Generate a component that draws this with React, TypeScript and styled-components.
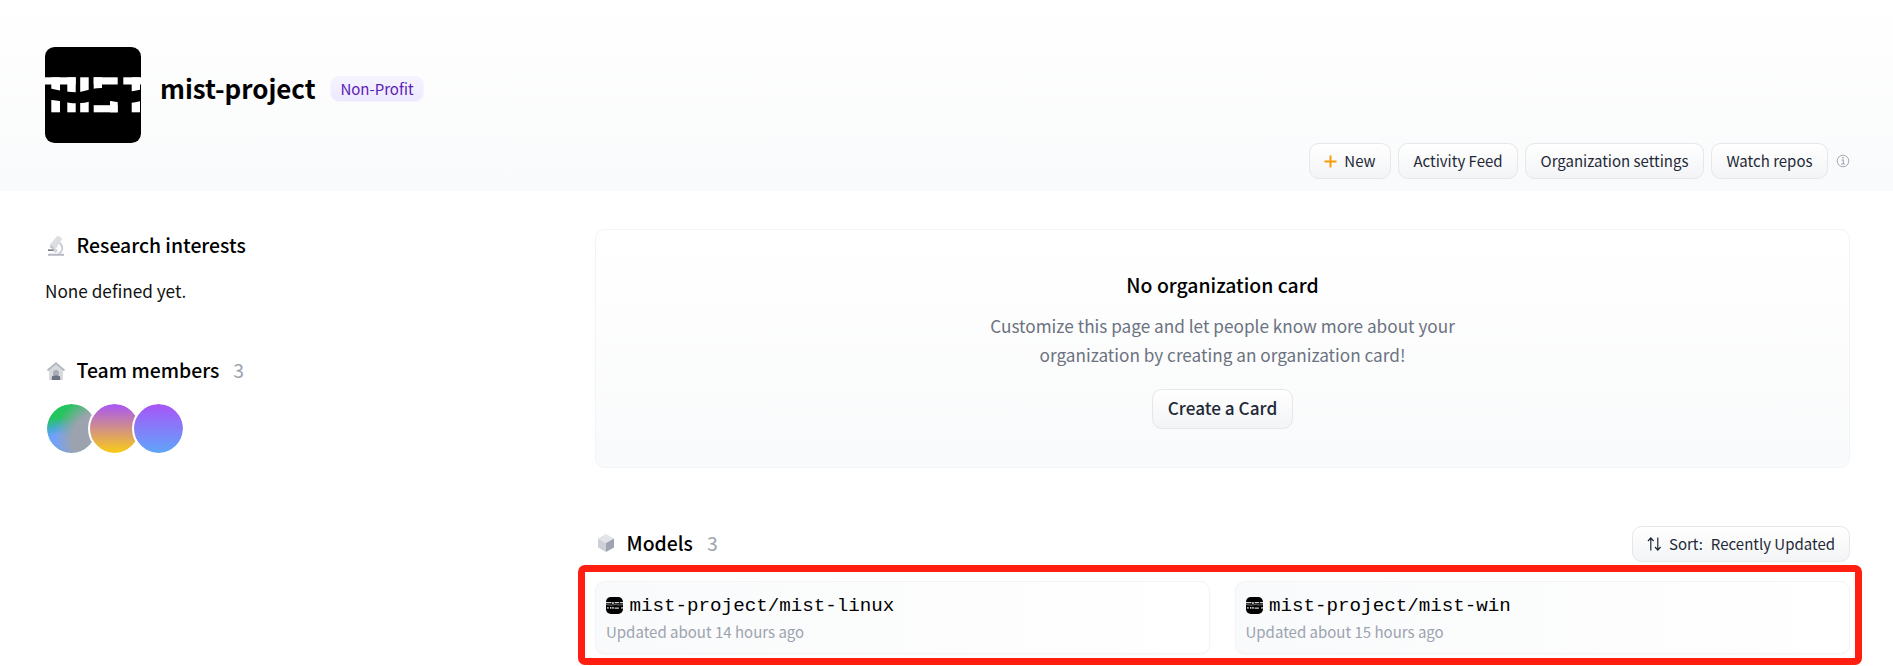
import React from "react";
import styled, { createGlobalStyle } from "styled-components";

const GlobalStyle = createGlobalStyle`
  *, *::before, *::after { box-sizing: border-box; }
  body {
    margin: 0;
    background: #fff;
    color: #000;
    font-family: "Noto Sans CJK SC", "Noto Sans", sans-serif;
    font-size: 17.2px;
    line-height: 29px;
    overflow: hidden;
  }
  h1, h2, h3, p { margin: 0; }
  button { font-family: inherit; margin: 0; }
`;

const Page = styled.div`
  height: 666px;
  overflow: hidden;
`;

const Header = styled.header`
  height: 191px;
  padding: 47px 43px 12px 45px;
  background: linear-gradient(to bottom, #fff, #f9fafb);
  display: flex;
  flex-direction: column;
  justify-content: space-between;
`;

const Identity = styled.div`
  display: flex;
  align-items: flex-start;
  height: 96px;
`;

const Title = styled.h1`
  margin: 23px 0 0 19px;
  width: 155px;
  font-size: 25.9px;
  font-weight: 700;
  line-height: 36px;
  white-space: nowrap;
`;

const Badge = styled.span`
  margin: 29px 0 0 15px;
  width: 94px;
  height: 26px;
  border: 1px solid #f5f3ff;
  border-radius: 9px;
  background: linear-gradient(to bottom, #f5f3ff, #ede9fe);
  color: #5b21b6;
  font-size: 15px;
  line-height: 23px;
  text-align: center;
`;

const Actions = styled.div`
  display: flex;
  align-items: center;
  justify-content: flex-end;
  gap: 7px;
  margin-top: -1px;
  > svg { margin-left: 1px; }
`;

const Button = styled.button<{ $w: number; $h?: number; $size?: number; $medium?: boolean }>`
  width: ${(p) => p.$w}px;
  height: ${(p) => p.$h ?? 36}px;
  padding: ${(p) => (p.$medium ? "0 0 2px" : "0")};
  display: flex;
  align-items: center;
  justify-content: center;
  border: 1px solid #e5e7eb;
  border-radius: 9.6px;
  background: linear-gradient(to bottom, #fff, #f3f4f6);
  color: #1f2937;
  font-size: ${(p) => p.$size ?? 15}px;
  font-weight: ${(p) => (p.$medium ? 500 : 400)};
  line-height: 24px;
  white-space: nowrap;
`;

const Columns = styled.main`
  display: grid;
  grid-template-columns: 550px 1255px;
  padding: 38px 0 0 45px;
`;

const Side = styled.aside`
  display: flex;
  flex-direction: column;
  padding-top: 2px;
`;

const Heading = styled.h2`
  display: flex;
  align-items: center;
  height: 29px;
  padding-bottom: 2px;
  font-size: 19.4px;
  font-weight: 500;
  white-space: nowrap;
  svg { margin: 2px 11.6px 0 0; flex: none; }
`;

const Count = styled.span`
  margin-left: 14px;
  color: #9ca3af;
  font-weight: 400;
`;

const SideText = styled.p`
  margin-top: 16px;
  color: #111;
`;

const Team = styled.section`
  margin-top: 51px;
`;

const Members = styled.div`
  display: flex;
  margin: 17px 0 0 -0.3px;
`;

const Member = styled.span<{ $fill: string }>`
  width: 53px;
  height: 53px;
  margin-right: -9.6px;
  border: 2.4px solid #fff;
  border-radius: 50%;
  background: ${(p) => p.$fill};
  background-clip: padding-box;
`;

const Main = styled.div`
  display: flex;
  flex-direction: column;
`;

const EmptyCard = styled.section`
  height: 239px;
  padding-top: 40px;
  display: flex;
  flex-direction: column;
  align-items: center;
  border: 1px solid #f3f4f6;
  border-radius: 9.6px;
  background: linear-gradient(to bottom, #fff, #f9fafb);
`;

const EmptyTitle = styled.h3`
  font-size: 19.4px;
  font-weight: 500;
  line-height: 29px;
`;

const EmptyText = styled.p`
  margin: 12px 0 20px;
  width: 480px;
  color: #6b7280;
  text-align: center;
`;

const ModelsBar = styled.div`
  display: flex;
  align-items: center;
  justify-content: space-between;
  height: 36px;
  margin-top: 58px;
`;

const ModelsHeading = styled(Heading)`
  margin-top: -2px;
  svg { margin: 2px 11.6px 0 2px; }
`;

const SortLabel = styled.span`
  margin: 0 8px 0 7px;
`;

const Frame = styled.section`
  margin: 3px -12px 0 -17px;
  height: 100px;
  padding: 9px 5px 0 10px;
  display: grid;
  grid-template-columns: 615px 615px;
  column-gap: 24.5px;
  align-items: start;
  border: 7px solid #ff1e10;
  border-radius: 7px;
`;

const ModelCard = styled.article`
  height: 73px;
  padding: 9px 10px;
  border: 1px solid #f3f4f6;
  border-radius: 9.6px;
  background: linear-gradient(to right, #f9fafb, #fff);
  box-shadow: 0 1px 2px rgba(0, 0, 0, 0.03);
`;

const ModelName = styled.div`
  display: flex;
  align-items: center;
  height: 30px;
  gap: 6.5px;
  font-family: "Liberation Mono", monospace;
  font-size: 19.2px;
  white-space: nowrap;
  svg { margin-top: -2px; }
`;

const Updated = styled.div`
  color: #9ca3af;
  font-size: 15px;
  line-height: 22px;
`;

const LogoSvg = styled.svg<{ $radius: number }>`
  flex: none;
  border-radius: ${(p) => p.$radius}px;
`;

const Logo = ({ size, radius }: { size: number; radius: number }) => (
  <LogoSvg $radius={radius} width={size} height={size} viewBox="0 0 96 96">
    <rect width="96" height="96" fill="#000" />
    <g fill="#fff">
      <rect x="0" y="30.3" width="30.7" height="7.2" />
      <rect x="6.3" y="30.3" width="8.7" height="35" />
      <rect x="22.3" y="30.3" width="8.4" height="35" />
      <rect x="35.2" y="30.3" width="8.5" height="35" />
      <rect x="48.7" y="30.3" width="24" height="7.2" />
      <rect x="48.7" y="30.3" width="8.3" height="16" />
      <rect x="48.7" y="58.2" width="24" height="7.1" />
      <rect x="65" y="50" width="7.7" height="15.3" />
      <rect x="78.3" y="30.3" width="17.7" height="7.2" />
      <rect x="86.7" y="30.3" width="8.3" height="35" />
    </g>
    <path fill="#000" d="M0 40.5Q8 42 15 43.5Q28 46 36 44.8Q42 43.500 48 41.800Q58 39.800 72 43Q82 46.500 96 42.500V54Q84 57.500 72 55Q62 53 48 53.700Q36 57.500 24 55.800Q14 53.500 0 52.500Z" />
  </LogoSvg>
);

const SmallLogo = () => (
  <LogoSvg $radius={4.8} width="17" height="17" viewBox="0 0 17 17">
    <rect width="17" height="17" fill="#000" />
    <g fill="#d4d4d4">
      <path d="M0 5h5.500v1.200H0ZM6.200 5h1.500v2H6.200ZM8.600 5h4.300v1.200H8.600ZM13.800 5H17v1.200h-3.200Z" />
      <path d="M1.200 10h1.400v1.800H1.200ZM4 10h1.400v1.800H4ZM6.200 10h1.500v1.800H6.200ZM8.600 10.600h4.300v1.200H8.600ZM15.300 10h1.400v1.800h-1.400Z" />
    </g>
    <path d="M0 7.400 5 8.200 9 7.500 13 8 17 7.600" stroke="#777" strokeWidth=".9" fill="none" />
  </LogoSvg>
);

const PlusSvg = styled.svg`
  margin-right: 7px;
`;

const PlusIcon = () => (
  <PlusSvg width="13" height="13" viewBox="0 0 13 13">
    <path d="M6.5 .5v12M.5 6.5h12" stroke="#f59e0b" strokeWidth="2" />
  </PlusSvg>
);

const InfoIcon = () => (
  <svg width="14" height="14" viewBox="0 0 14 14" fill="none" stroke="#a6abb5">
    <circle cx="7" cy="7" r="5.8" />
    <path d="M5.5 6h1.8v4M5 10h4" strokeWidth="1.2" />
    <path d="M6.2 3.8h1.5" strokeWidth="1.5" />
  </svg>
);

const MicroscopeIcon = () => (
  <svg width="20" height="22" viewBox="0 0 20 22">
    <path d="M14 7.500c4.500 3 4.500 8.500-.5 11" fill="none" stroke="#c9ccd3" strokeWidth="1.800" />
    <path d="M5 9.500 11.500 1.800q1-1 2-.7l2.800 1.500q1 1 .3 2.200L11.500 13q-1.200 1.500-3 .7l-2.500-1.500q-1.500-1-1-2.700Z" fill="#dcdee2" />
    <path d="M5.800 10.200 9.500 12.800 8 14.300 4.600 12Z" fill="#c0c4cc" />
    <path d="M3 14.300h6v1.700H3Z" fill="#7b808c" />
    <circle cx="10.500" cy="15.700" r="2" fill="#d1d5db" />
    <rect x="3" y="18.700" width="16" height="2" rx=".5" fill="#b4b8c1" />
  </svg>
);

const HouseIcon = () => (
  <svg width="20" height="20" viewBox="0 0 20 20">
    <path d="M4 8.500 11 3l7 5.500V19H4Z" fill="#d8dade" />
    <path d="M2.500 9.500 11 2.200l8.500 7.300" fill="none" stroke="#b4b8c1" strokeWidth="1.900" />
    <circle cx="11" cy="12" r="3" fill="#a7abb5" />
    <path d="M6.700 19v-2.200q0-2.300 2.300-2.300h4q2.300 0 2.300 2.300V19Z" fill="#6b7280" />
  </svg>
);

const CubeIcon = () => (
  <svg width="18" height="20" viewBox="0 0 18 20">
    <path d="M9 1 17 5.400 9 10 1 5.400Z" fill="#e2e4e8" />
    <path d="M1 5.400 9 10v9L1 14.500Z" fill="#cdd0d7" />
    <path d="M17 5.400 9 10v9l8-4.500Z" fill="#a0a4b0" />
  </svg>
);

const SortIcon = () => (
  <svg width="15" height="14" viewBox="0 0 15 14" fill="none" stroke="#1f2937" strokeWidth="1.200">
    <path d="M3.800 13.500V1M1 4l2.800-3 2.800 3M10.800 .5V13M8 10l2.800 3 2.800-3" />
  </svg>
);

const members = [
  "radial-gradient(circle at 105% 72%, #9ca3af 42%, rgba(156,163,175,0) 72%), radial-gradient(circle at 25% 100%, #6ea1fb 30%, rgba(78,165,235,.85) 40%, rgba(50,185,150,0) 58%), #22c55e",
  "linear-gradient(to bottom, #a855f7, #facc15)",
  "linear-gradient(to bottom, #a855f7, #60a5fa)",
];

const models = [
  { name: "mist-project/mist-linux", updated: "Updated about 14 hours ago" },
  { name: "mist-project/mist-win", updated: "Updated about 15 hours ago" },
];

export default function App() {
  return (
    <Page>
      <GlobalStyle />
      <Header>
        <Identity>
          <Logo size={96} radius={9.6} />
          <Title>mist-project</Title>
          <Badge>Non-Profit</Badge>
        </Identity>
        <Actions>
          <Button $w={82}><PlusIcon />New</Button>
          <Button $w={120}>Activity Feed</Button>
          <Button $w={179}>Organization settings</Button>
          <Button $w={117}>Watch repos</Button>
          <InfoIcon />
        </Actions>
      </Header>
      <Columns>
        <Side>
          <Heading><MicroscopeIcon />Research interests</Heading>
          <SideText>None defined yet.</SideText>
          <Team>
            <Heading><HouseIcon />Team members<Count>3</Count></Heading>
            <Members>
              {members.map((fill) => <Member key={fill} $fill={fill} />)}
            </Members>
          </Team>
        </Side>
        <Main>
          <EmptyCard>
            <EmptyTitle>No organization card</EmptyTitle>
            <EmptyText>
              Customize this page and let people know more about your organization by creating an organization card!
            </EmptyText>
            <Button $w={141} $h={40} $size={17.2} $medium>Create a Card</Button>
          </EmptyCard>
          <ModelsBar>
            <ModelsHeading><CubeIcon />Models<Count>3</Count></ModelsHeading>
            <Button $w={218}><SortIcon /><SortLabel>Sort:</SortLabel>Recently Updated</Button>
          </ModelsBar>
          <Frame>
            {models.map((m) => (
              <ModelCard key={m.name}>
                <ModelName><SmallLogo />{m.name}</ModelName>
                <Updated>{m.updated}</Updated>
              </ModelCard>
            ))}
          </Frame>
        </Main>
      </Columns>
    </Page>
  );
}
